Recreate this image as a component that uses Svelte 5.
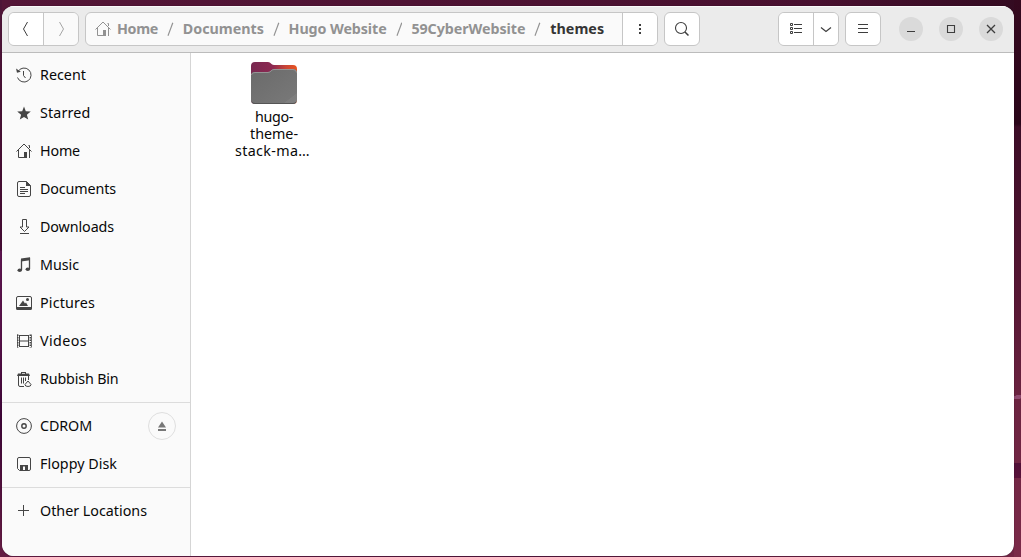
<script>
  const places = [
    ['recent', 'Recent', 46], ['star', 'Starred', 50.5], ['home', 'Home', 40], ['doc', 'Documents', 76],
    ['down', 'Downloads', 74], ['music', 'Music', 39], ['pic', 'Pictures', 55], ['video', 'Videos', 47],
    ['trash', 'Rubbish Bin', 78.5]
  ];
  const devices = [['disc', 'CDROM', 52, true], ['floppy', 'Floppy Disk', 77]];
  const other = [['plus', 'Other Locations', 107]];
  const groups = [places, devices, other];
  const crumbs = [['Documents', 81], ['Hugo Website', 98], ['59CyberWebsite', 114], ['themes', 54]];

  // Tracks a label out (or in) so it fills its intended width.
  function fit(node, width) {
    const natural = node.getBoundingClientRect().width;
    node.style.letterSpacing = (width - natural) / node.textContent.length + 'px';
  }
</script>

{#snippet icon(name)}
  <svg class="icon" width="16" height="16" viewBox="0 0 16 16" fill="none" stroke="currentColor">
    {#if name === 'recent'}
      <path d="M2 4.500A7 7 0 1 1 1.500 10.500M7.500 4v4.500L9.500 11" /><path d="M0 1.500l1 4.200 3.800-1z" fill="currentColor" stroke="none" />
    {:else if name === 'star'}
      <path d="M8 1.500l1.800 4.700 5 .3-3.900 3.200 1.300 4.900L8 11.900l-4.200 2.700 1.300-4.900-3.900-3.200 5-.3z" fill="currentColor" stroke="none" />
    {:else if name === 'home'}
      <path d="M.5 8.500L8 1l7.500 7.500M2.500 7v7.500H9M13.500 7v8M12.500 2.500h1V5" /><path d="M8 9h3v6H8z" fill="currentColor" stroke="none" />
    {:else if name === 'doc'}
      <path d="M10.500.5H3Q1.500.5 1.500 2v12Q1.500 15.500 3 15.500h10q1.500 0 1.500-1.500V4.500zM4 6.500h5M4 8.500h8M4 10.500h8M4 12.500h5" /><path d="M10 0v5h5z" fill="currentColor" stroke="none" />
    {:else if name === 'down'}
      <path d="M6.500.5h4V8H13l-4.500 4.500L4 8h2.500zM4 14.500h9" />
    {:else if name === 'music'}
      <path d="M5.500 13V3L13.500 1.500V12" stroke-width="1.300" /><path d="M5 1.500L14 .3v3L5 4.500z" fill="currentColor" stroke="none" /><ellipse cx="3.700" cy="13.200" rx="2.200" ry="1.800" fill="currentColor" stroke="none" /><ellipse cx="11.800" cy="12.200" rx="2.200" ry="1.800" fill="currentColor" stroke="none" />
    {:else if name === 'pic'}
      <rect x=".5" y="1.500" width="15" height="12" rx="1.500" /><path d="M0 12h16v1.500q0 1.500-1.500 1.500h-13Q0 15 0 13.500zM3 11l4-5.500 2 3 1-1 2 3.500z" fill="currentColor" stroke="none" /><circle cx="11.500" cy="4.500" r="1.500" fill="currentColor" stroke="none" />
    {:else if name === 'video'}
      <path d="M3.500 2v12M12.500 2v12M3 2.500h10M3 8h10M3 13.500h10" /><path d="M1.750 1.500v13M14.250 1.500v13" stroke-width="1.500" stroke-dasharray="1.500 1" /><path d="M1.500 1.500v13M15.500 1.500v13" stroke-width=".8" />
    {:else if name === 'trash'}
      <path d="M1 5l1-2.500h3V1h5v1.500h3L14 5zM6 2.200v.8h3v-.8z" fill="currentColor" fill-rule="evenodd" stroke="none" /><path d="M2.500 5v9q0 1.500 1.500 1.500h4M12.500 5v4M5.500 6.500v6M7.500 6.500v6M9.500 6.500V10M12 10l3 3.500q0 2-3 2t-3-2z" />
    {:else if name === 'disc'}
      <circle cx="8" cy="8" r="7.400" /><circle cx="8" cy="8" r="2.200" stroke-width="1.400" />
    {:else if name === 'floppy'}
      <path d="M3 1.500h10q1.500 0 1.500 1.500v10q0 1.500-1.500 1.500H3.500L1.500 12.500V3Q1.500 1.500 3 1.500z" /><path d="M4 9h8v6H4zM7 10.500v4h2v-4z" fill="currentColor" fill-rule="evenodd" stroke="none" />
    {:else if name === 'plus'}
      <path d="M2 7.500h11M7.500 2v11" />
    {:else if name === 'back'}
      <path d="M9.500 1L5.500 8l4 7" />
    {:else if name === 'forward'}
      <path d="M6.500 1l4 7-4 7" />
    {:else if name === 'dots'}
      <path d="M7 3h2v2H7zM7 7h2v2H7zM7 11h2v2H7z" fill="currentColor" stroke="none" />
    {:else if name === 'search'}
      <circle cx="7" cy="7" r="5.500" stroke-width="1.100" /><path d="M11 11l3.500 3.500" stroke-width="1.500" />
    {:else if name === 'list'}
      <path d="M2.500 2.500h2v2h-2zM2.500 6.500h2v2h-2zM2.500 10.500h2v2h-2zM6 3.500h8M6 7.500h8M6 11.500h8" />
    {:else if name === 'chevron'}
      <path d="M3 6.500l5 4 5-4" stroke-width="1.200" />
    {:else if name === 'menu'}
      <path d="M3 3.500h10M3 7.500h10M3 11.500h10" />
    {:else if name === 'minimise'}
      <path d="M4 10.500h8" />
    {:else if name === 'maximise'}
      <path d="M4.500 4.500h7v7h-7z" stroke-width="1.100" />
    {:else if name === 'close'}
      <path d="M4 4l8 8M12 4l-8 8" stroke-width="1.300" />
    {:else if name === 'eject'}
      <path d="M8 3.500l4 6H4zM4 11h8v2H4z" fill="currentColor" stroke="none" />
    {/if}
  </svg>
{/snippet}

<div class="desktop">
  <div class="window">
    <header>
      <div class="box nav"><button>{@render icon('back')}</button><button class="off">{@render icon('forward')}</button></div>
      <div class="box path">
        <div class="crumbs">
          {@render icon('home')}
          <b class="first"><span use:fit={41}>Home</span></b>
          {#each crumbs as [name, width], i}
            <svg class="slash" width="6.8" height="16" viewBox="0 0 7 16"><path d="M1 15L6 1.500" /></svg>
            <b class:current={i === 3} style:width="{width}px"><span use:fit={width}>{name}</span></b>
          {/each}
        </div>
        <button>{@render icon('dots')}</button>
      </div>
      <button class="box single">{@render icon('search')}</button>
      <div class="space"></div>
      <div class="box view"><button>{@render icon('list')}</button><button>{@render icon('chevron')}</button></div>
      <button class="box single">{@render icon('menu')}</button>
      <div class="controls">
        {#each ['minimise', 'maximise', 'close'] as name}<button>{@render icon(name)}</button>{/each}
      </div>
    </header>
    <div class="body">
      <nav>
        {#each groups as group}
          <ul>
            {#each group as [glyph, label, width, ejectable]}
              <li>
                {@render icon(glyph)}<span class="label" use:fit={width}>{label}</span>
                {#if ejectable}<button class="eject">{@render icon('eject')}</button>{/if}
              </li>
            {/each}
          </ul>
        {/each}
      </nav>
      <main>
        <div class="file">
          <svg width="48" height="44" viewBox="0 0 48 44">
            <defs>
              <linearGradient id="tab"><stop offset="0" stop-color="#782850" /><stop offset=".48" stop-color="#8d2951" /><stop offset=".75" stop-color="#c84537" /><stop offset="1" stop-color="#e95420" /></linearGradient>
              <linearGradient id="front" x2="1" y2="1"><stop offset="0" stop-color="#6a6a6a" /><stop offset=".84" stop-color="#777" /><stop offset=".85" stop-color="#7e7e7e" /><stop offset="1" stop-color="#808080" /></linearGradient>
            </defs>
            <path d="M1 5q0-4 4-4h13c3 0 3 3 6 3h19q4 0 4 4v31q0 4-4 4H5q-4 0-4-4z" fill="url(#tab)" />
            <path d="M1 15q0-4 4-4h13c3 0 3-3 6-3h19q4 0 4 4v27q0 4-4 4H5q-4 0-4-4z" fill="url(#front)" />
            <path d="M1.500 14q0-2.500 3.500-2.500h13c3 0 3-3 6-3h19q3.500 0 3.500 3" fill="none" stroke="#959595" />
            <path d="M2 41q1 1.500 3 1.500h38q2 0 3-1.500" fill="none" stroke="#555" />
          </svg>
          <p><span use:fit={38}>hugo-</span></p>
          <p><span use:fit={48}>theme-</span></p>
          <p class="last"><span use:fit={75}>stack-ma…</span></p>
        </div>
      </main>
    </div>
  </div>
</div>

<style>
  :global(body) { overflow: hidden; }
  * { box-sizing: border-box; }
  .desktop {
    height: 557px; padding: 6px 7px 1px 2px;
    background:
      linear-gradient(173deg, transparent 30%, #8f4a70 32%, #8f4a70 70%, transparent 72%) 100% 393px / 7px 8px no-repeat,
      linear-gradient(#501038, #591139) 100% 463px / 7px 15px no-repeat,
      linear-gradient(#35091f 0, #2b061a 124px, #3c0d27 127px, #571734 300px, #6b2340 400px, #7b2a49) 100% 0 / 7px 100% no-repeat,
      linear-gradient(#4d1537 0, #430b32 250px, #5c154f 251px, #551047 340px, #3c0536 420px, #651c43) 0 0 / 2px 100% no-repeat,
      linear-gradient(90deg, #541637, #48102f 80%, #330b21) 0 0 / 100% 20px no-repeat,
      linear-gradient(90deg, #641c43, #50163b 50%, #712544);
    font: 14.3px/17px 'Noto Sans', sans-serif; color: #080808;
  }
  .window { height: 550px; border-radius: 12px; overflow: hidden; background: #fff; display: flex; flex-direction: column; box-shadow: 0 0 1px #20041a; }
  header { height: 47px; padding: 6px 11px 6px 6px; background: #ebebeb; border-bottom: 1px solid #bcbcbc; box-shadow: inset 0 1px #fafafa; display: flex; align-items: flex-start; gap: 6px; flex: none; }
  button { border: 0; margin: 0; padding: 0; background: #fff; color: #3d3d3d; display: flex; align-items: center; justify-content: center; height: 100%; }
  .icon { display: block; flex: none; }
  .box { height: 34px; border: 1px solid #c6c6c6; border-radius: 6px; display: flex; overflow: hidden; flex: none; }
  .box > button + button, .path > button { border-left: 1px solid #c6c6c6; }
  .nav { width: 71px; }
  .nav button { width: 34px; }
  .nav .off { flex: 1; background: #fafafa; color: #a5a5a5; }
  .path { width: 573px; background: #fafafa; }
  .crumbs { width: 536px; padding-left: 9px; display: flex; align-items: center; color: #929292; flex: none; }
  .crumbs b { font-size: 14.3px; line-height: 32px; white-space: nowrap; flex: none; }
  .crumbs .first { width: 41px; margin-left: 6px; }
  .crumbs .current { color: #353535; }
  .slash { margin: 0 9px; flex: none; fill: none; stroke: #929292; stroke-width: 1.2; }
  .path > button { flex: 1; }
  .single { width: 36px; }
  .space { flex: 1; }
  .view { width: 61px; }
  .view button:first-child { width: 34px; }
  .view button:last-child { flex: 1; }
  .controls { display: flex; gap: 16px; padding: 5px 0 0 12px; }
  .controls button { width: 24px; height: 24px; border-radius: 50%; background: #dadada; }
  .body { display: flex; flex: 1; }
  nav { width: 189px; background: #fafafa; border-right: 1px solid #d5d5d5; padding-top: 3px; }
  ul { list-style: none; margin: 0; padding: 0 14px; }
  ul + ul { border-top: 1px solid #dcdcdc; margin-top: 4px; padding-top: 4px; }
  li { height: 38px; display: flex; align-items: center; gap: 8px; white-space: nowrap; }
  li > .icon { color: #454545; }
  .label { padding-bottom: 2px; }
  .eject { width: 28px; height: 28px; border: 1px solid #dfdfdf; border-radius: 50%; background: #fafafa; color: #777; margin-left: auto; }
  main { flex: 1; padding: 8px 0 0 36px; }
  .file { width: 94px; display: flex; flex-direction: column; align-items: center; }
  .file svg { margin-bottom: 3px; }
  p { margin: 0; white-space: nowrap; }
  p.last { margin-right: 3px; }
</style>
